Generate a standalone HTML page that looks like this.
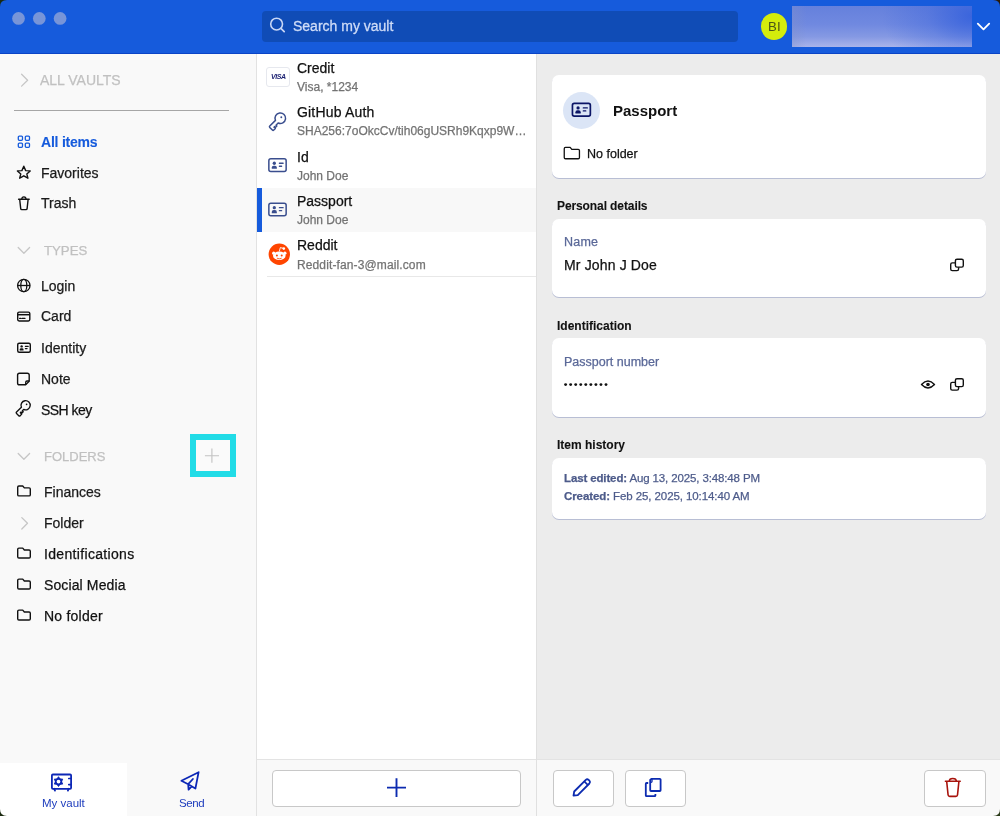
<!DOCTYPE html><html><head><meta charset="utf-8"><style>
html,body{margin:0;padding:0;width:1000px;height:816px;overflow:hidden;background:#fff}
body{position:relative;font-family:"Liberation Sans",sans-serif}
.t{position:absolute;white-space:nowrap;will-change:transform;-webkit-text-stroke:0.25px currentColor}
svg.ov{position:absolute;left:0;top:0}
</style></head><body>
<div style="position:absolute;left:0px;top:0px;width:1000px;height:53px;background:#165bdc"></div>
<div style="position:absolute;left:0px;top:53px;width:1000px;height:1px;background:#0a44c6"></div>
<div style="position:absolute;left:262px;top:11px;width:476px;height:31px;background:#104cb6;border-radius:4px"></div>
<div class="t" style="left:293px;top:19.35px;font-size:14px;line-height:14px;color:#cfdcf7;font-weight:400;-webkit-text-stroke:0.3px #cfdcf7">Search my vault</div>
<div style="position:absolute;left:760.5px;top:13px;width:26.5px;height:26.5px;border-radius:50%;background:#d4ec0c"></div>
<div class="t" style="left:768.3px;top:19.73px;font-size:13.2px;line-height:13.2px;color:#4a5418;font-weight:400;letter-spacing:0.2px;-webkit-text-stroke:0">BI</div>
<div style="position:absolute;left:791.5px;top:6px;width:180px;height:41px;background:radial-gradient(ellipse 90px 60px at 100% 25%, rgba(50,95,220,0.85), rgba(50,95,220,0.3) 50%, rgba(50,95,220,0) 100%),linear-gradient(90deg,rgba(130,145,200,0.35) 0%,rgba(130,145,200,0) 8%),linear-gradient(180deg,#6580dc 0%,#7089e0 45%,#8599e3 75%,#a9b4ea 100%)"></div>
<div style="position:absolute;left:0px;top:54px;width:256px;height:762px;background:#f9f9f9"></div>
<div style="position:absolute;left:256px;top:54px;width:1px;height:762px;background:#e2e2e2"></div>
<div class="t" style="left:40px;top:73.35px;font-size:14px;line-height:14px;color:#c1c1c1;font-weight:400;">ALL VAULTS</div>
<div style="position:absolute;left:14px;top:110px;width:215px;height:1.3px;background:#a6a6a6"></div>
<div class="t" style="left:41px;top:134.65px;font-size:14px;line-height:14px;color:#165bdc;font-weight:700;letter-spacing:-0.22px;-webkit-text-stroke:0.1px">All items</div>
<div class="t" style="left:41px;top:165.85px;font-size:14px;line-height:14px;color:#1b1b1b;font-weight:400;">Favorites</div>
<div class="t" style="left:41px;top:196.35px;font-size:14px;line-height:14px;color:#1b1b1b;font-weight:400;">Trash</div>
<div class="t" style="left:44px;top:243.53px;font-size:13.2px;line-height:13.2px;color:#c1c1c1;font-weight:400;">TYPES</div>
<div class="t" style="left:41px;top:279.05px;font-size:14px;line-height:14px;color:#1b1b1b;font-weight:400;">Login</div>
<div class="t" style="left:41px;top:309.15px;font-size:14px;line-height:14px;color:#1b1b1b;font-weight:400;">Card</div>
<div class="t" style="left:41px;top:340.95px;font-size:14px;line-height:14px;color:#1b1b1b;font-weight:400;">Identity</div>
<div class="t" style="left:41px;top:371.75px;font-size:14px;line-height:14px;color:#1b1b1b;font-weight:400;">Note</div>
<div class="t" style="left:41px;top:402.65px;font-size:14px;line-height:14px;color:#111111;font-weight:400;letter-spacing:-0.55px">SSH key</div>
<div class="t" style="left:44px;top:449.90px;font-size:13px;line-height:13px;color:#c1c1c1;font-weight:400;">FOLDERS</div>
<div style="position:absolute;left:190px;top:434px;width:46px;height:43px;box-sizing:border-box;border:6px solid #22dce7;background:#fafafa"></div>
<div class="t" style="left:44px;top:484.75px;font-size:14px;line-height:14px;color:#1b1b1b;font-weight:400;">Finances</div>
<div class="t" style="left:44px;top:515.85px;font-size:14px;line-height:14px;color:#1b1b1b;font-weight:400;">Folder</div>
<div class="t" style="left:44px;top:546.85px;font-size:14px;line-height:14px;color:#111111;font-weight:400;letter-spacing:0.33px">Identifications</div>
<div class="t" style="left:44px;top:577.85px;font-size:14px;line-height:14px;color:#111111;font-weight:400;letter-spacing:0.12px">Social Media</div>
<div class="t" style="left:44px;top:608.85px;font-size:14px;line-height:14px;color:#111111;font-weight:400;letter-spacing:0.22px">No folder</div>
<div style="position:absolute;left:0px;top:763px;width:127px;height:53px;background:#ffffff"></div>
<div class="t" style="left:41.5px;top:798.17px;font-size:11.5px;line-height:11.5px;color:#1e3dbd;font-weight:400;-webkit-text-stroke:0">My vault</div>
<div class="t" style="left:179px;top:798.07px;font-size:11.5px;line-height:11.5px;color:#1e3dbd;font-weight:400;letter-spacing:-0.4px;-webkit-text-stroke:0">Send</div>
<div style="position:absolute;left:257px;top:54px;width:279px;height:706px;background:#ffffff"></div>
<div style="position:absolute;left:536px;top:54px;width:1px;height:762px;background:#e0e0e0"></div>
<div style="position:absolute;left:257px;top:188px;width:279px;height:44px;background:#f8f8f8"></div>
<div style="position:absolute;left:257px;top:188px;width:5px;height:44px;background:#165bdc"></div>
<div class="t" style="left:297px;top:60.75px;font-size:14px;line-height:14px;color:#111111;font-weight:400;letter-spacing:0px">Credit</div>
<div class="t" style="left:297px;top:81.04px;font-size:12px;line-height:12px;color:#737373;font-weight:400;letter-spacing:0px">Visa, *1234</div>
<div class="t" style="left:297px;top:105.15px;font-size:14px;line-height:14px;color:#111111;font-weight:400;letter-spacing:0.18px">GitHub Auth</div>
<div class="t" style="left:297px;top:125.44px;font-size:12px;line-height:12px;color:#737373;font-weight:400;letter-spacing:0px">SHA256:7oOkcCv/tih06gUSRh9Kqxp9W…</div>
<div class="t" style="left:297px;top:149.55px;font-size:14px;line-height:14px;color:#111111;font-weight:400;letter-spacing:0px">Id</div>
<div class="t" style="left:297px;top:169.84px;font-size:12px;line-height:12px;color:#737373;font-weight:400;letter-spacing:0px">John Doe</div>
<div class="t" style="left:297px;top:193.95px;font-size:14px;line-height:14px;color:#111111;font-weight:400;letter-spacing:0px">Passport</div>
<div class="t" style="left:297px;top:214.24px;font-size:12px;line-height:12px;color:#737373;font-weight:400;letter-spacing:0px">John Doe</div>
<div class="t" style="left:297px;top:238.35px;font-size:14px;line-height:14px;color:#111111;font-weight:400;letter-spacing:0px">Reddit</div>
<div class="t" style="left:297px;top:258.64px;font-size:12px;line-height:12px;color:#737373;font-weight:400;letter-spacing:0.12px">Reddit-fan-3@mail.com</div>
<div style="position:absolute;left:267px;top:276px;width:269px;height:1px;background:#e8e8e8"></div>
<div style="position:absolute;left:265.5px;top:67px;width:24.5px;height:19.5px;box-sizing:border-box;border:1px solid #e6e8ee;border-radius:3px;background:#fff"></div>
<div class="t" style="left:270.6px;top:73.37px;font-size:7px;line-height:7px;color:#1a1f71;font-weight:700;letter-spacing:-0.4px;font-style:italic;-webkit-text-stroke:0">VISA</div>
<div style="position:absolute;left:537px;top:54px;width:463px;height:706px;background:#ececec"></div>
<div style="position:absolute;left:552px;top:75px;width:434px;height:103px;background:#fff;border-radius:7px;box-shadow:0 1px 0 #b8bed4"></div>
<div style="position:absolute;left:563px;top:92px;width:37px;height:37px;border-radius:50%;background:#dbe5f6"></div>
<div class="t" style="left:613px;top:102.90px;font-size:15px;line-height:15px;color:#111111;font-weight:700;-webkit-text-stroke:0">Passport</div>
<div class="t" style="left:586.5px;top:148.42px;font-size:12.5px;line-height:12.5px;color:#111111;font-weight:400;">No folder</div>
<div class="t" style="left:557px;top:199.84px;font-size:12px;line-height:12px;color:#111111;font-weight:700;letter-spacing:-0.1px;-webkit-text-stroke:0.1px">Personal details</div>
<div style="position:absolute;left:552px;top:218.5px;width:434px;height:78.5px;background:#fff;border-radius:7px;box-shadow:0 1px 0 #b8bed4"></div>
<div class="t" style="left:564px;top:236.42px;font-size:12.5px;line-height:12.5px;color:#5a6898;font-weight:400;letter-spacing:0.2px">Name</div>
<div class="t" style="left:564px;top:258.15px;font-size:14px;line-height:14px;color:#111111;font-weight:400;letter-spacing:0.15px">Mr John J Doe</div>
<div class="t" style="left:557px;top:319.54px;font-size:12px;line-height:12px;color:#111111;font-weight:700;-webkit-text-stroke:0.1px">Identification</div>
<div style="position:absolute;left:552px;top:338px;width:434px;height:79px;background:#fff;border-radius:7px;box-shadow:0 1px 0 #b8bed4"></div>
<div class="t" style="left:564px;top:356.42px;font-size:12.5px;line-height:12.5px;color:#5a6898;font-weight:400;">Passport number</div>
<div class="t" style="left:557px;top:439.04px;font-size:12px;line-height:12px;color:#111111;font-weight:700;-webkit-text-stroke:0.1px">Item history</div>
<div style="position:absolute;left:552px;top:457.5px;width:434px;height:61px;background:#fff;border-radius:7px;box-shadow:0 1px 0 #b8bed4"></div>
<div class="t" style="left:564px;top:473.07px;font-size:11.5px;line-height:11.5px;color:#4d5b8a;font-weight:400;letter-spacing:-0.13px"><b>Last edited:</b> Aug 13, 2025, 3:48:48 PM</div>
<div class="t" style="left:564px;top:490.97px;font-size:11.5px;line-height:11.5px;color:#4d5b8a;font-weight:400;letter-spacing:-0.09px"><b>Created:</b> Feb 25, 2025, 10:14:40 AM</div>
<div style="position:absolute;left:257px;top:759px;width:743px;height:1px;background:#e3e3e3"></div>
<div style="position:absolute;left:257px;top:760px;width:279px;height:56px;background:#f9f9f9"></div>
<div style="position:absolute;left:537px;top:760px;width:463px;height:56px;background:#f9f9f9"></div>
<div style="position:absolute;left:536px;top:759px;width:1px;height:57px;background:#e0e0e0"></div>
<div style="position:absolute;left:272px;top:770px;width:248.5px;height:36.5px;box-sizing:border-box;background:#fff;border:1px solid #c8c8c8;border-radius:4px"></div>
<div style="position:absolute;left:553px;top:770px;width:60.5px;height:36.5px;box-sizing:border-box;background:#fff;border:1px solid #c8c8c8;border-radius:4px"></div>
<div style="position:absolute;left:624.5px;top:770px;width:61px;height:36.5px;box-sizing:border-box;background:#fff;border:1px solid #c8c8c8;border-radius:4px"></div>
<div style="position:absolute;left:924px;top:770px;width:61.5px;height:36.5px;box-sizing:border-box;background:#fff;border:1px solid #c8c8c8;border-radius:4px"></div>
<svg class="ov" width="1000" height="816" viewBox="0 0 1000 816"><circle cx="18.5" cy="18.4" r="6.35" fill="#7895d8"/>
<circle cx="39.3" cy="18.4" r="6.35" fill="#7895d8"/>
<circle cx="60.1" cy="18.4" r="6.35" fill="#7895d8"/>
<circle cx="276.6" cy="24.1" r="5.9" fill="none" stroke="#c9d7f6" stroke-width="1.6" /><path d="M280.9 28.4 L284.2 31.7" fill="none" stroke="#c9d7f6" stroke-width="1.7" stroke-linecap="round"/>
<path d="M977.8 23.6 L983.5 29.4 L989.2 23.6" fill="none" stroke="#ffffff" stroke-width="1.8" stroke-linecap="round" stroke-linejoin="round"/>
<path d="M21.6 74.3 L27.6 80.2 L21.6 86.1" fill="none" stroke="#c6c6c6" stroke-width="1.3" stroke-linecap="round" stroke-linejoin="round"/>
<rect x="18.3" y="136.1" width="4.2" height="4.2" rx="1" fill="none" stroke="#165bdc" stroke-width="1.3" />
<rect x="18.3" y="143.1" width="4.2" height="4.2" rx="1" fill="none" stroke="#165bdc" stroke-width="1.3" />
<rect x="25.3" y="136.1" width="4.2" height="4.2" rx="1" fill="none" stroke="#165bdc" stroke-width="1.3" />
<rect x="25.3" y="143.1" width="4.2" height="4.2" rx="1" fill="none" stroke="#165bdc" stroke-width="1.3" />
<path d="M23.8 166.2 L25.7 170.6 L30.2 170.9 L26.8 173.9 L27.9 178.2 L23.8 175.8 L19.7 178.2 L20.8 173.9 L17.4 170.9 L21.9 170.6 Z" fill="none" stroke="#111111" stroke-width="1.4" stroke-linejoin="round"/>
<path d="M18.6 199.3 H29.2" fill="none" stroke="#111111" stroke-width="1.4" stroke-linecap="round"/><path d="M21.8 199.1 Q21.8 196.8 23.9 196.8 Q26 196.8 26 199.1" fill="none" stroke="#111111" stroke-width="1.3" /><path d="M19.7 199.5 L20.7 208.6 Q20.8 209.6 21.8 209.6 H26 Q27 209.6 27.1 208.6 L28.1 199.5" fill="none" stroke="#111111" stroke-width="1.4" stroke-linejoin="round"/>
<path d="M18.2 247.5 L23.9 253.2 L29.6 247.5" fill="none" stroke="#c6c6c6" stroke-width="1.3" stroke-linecap="round" stroke-linejoin="round"/>
<circle cx="23.8" cy="285.5" r="6.2" fill="none" stroke="#111111" stroke-width="1.35" /><ellipse cx="23.8" cy="285.5" rx="3.0" ry="6.2" fill="none" stroke="#111111" stroke-width="1.3" /><path d="M17.6 285.5 H30" fill="none" stroke="#111111" stroke-width="1.3" />
<rect x="17.7" y="312.1" width="12.1" height="8.9" rx="1.4" fill="none" stroke="#111111" stroke-width="1.4" /><path d="M17.7 314.7 H29.8" fill="none" stroke="#111111" stroke-width="1.5" /><path d="M19.6 318.4 H20.9 M22.1 318.4 H25" fill="none" stroke="#111111" stroke-width="1.2" stroke-linecap="round"/>
<rect x="17.7" y="343.2" width="12.6" height="9.1" rx="1.5" fill="none" stroke="#111111" stroke-width="1.4" /><circle cx="21.62" cy="346.38" r="1.21" fill="#111111"/><path d="M19.73 350.48 V349.61 Q19.73 348.17 21.17 348.17 H22.07 Q23.51 348.17 23.51 349.61 V350.48 Z" fill="#111111"/><path d="M25.40 346.38 H28.20 M25.40 348.59 H27.08" fill="none" stroke="#111111" stroke-width="1.19" stroke-linecap="round"/>
<path d="M19.5 373.2 H27.3 Q29.2 373.2 29.2 375.1 V381.2 L25.6 384.8 H19.5 Q17.6 384.8 17.6 382.9 V375.1 Q17.6 373.2 19.5 373.2 Z" fill="none" stroke="#111111" stroke-width="1.4" stroke-linejoin="round"/><path d="M29.2 381 H27 Q25.7 381 25.7 382.3 V384.8" fill="none" stroke="#111111" stroke-width="1.3" />
<path d="M21.42 407.22 L16.55 412.09 Q15.84 412.80 16.55 413.50 L18.74 415.69 Q19.45 416.40 20.16 415.69 L21.71 414.14 L20.37 412.80 L21.07 412.09 L21.92 412.94 L23.20 411.66 L22.35 410.82 L23.68 409.48 A4.60 4.60 0 1 0 21.42 407.22 Z" fill="none" stroke="#111111" stroke-width="1.35" stroke-linejoin="round"/><circle cx="26.6" cy="404.3" r="0.85" fill="#111111"/>
<path d="M18.2 453.5 L23.9 459.2 L29.6 453.5" fill="none" stroke="#c6c6c6" stroke-width="1.3" stroke-linecap="round" stroke-linejoin="round"/>
<path d="M211.9 448.6 V462.8 M204.9 455.7 H219" fill="none" stroke="#c2c2c2" stroke-width="1.1" />
<path d="M18.90 486.00 H22.74 L24.34 487.90 H29.10 Q30.30 487.90 30.30 489.10 V494.70 Q30.30 495.90 29.10 495.90 H18.90 Q17.70 495.90 17.70 494.70 V487.20 Q17.70 486.00 18.90 486.00 Z" fill="none" stroke="#111111" stroke-width="1.4" stroke-linejoin="round"/>
<path d="M21.8 517.6 L27.5 523.3 L21.8 529" fill="none" stroke="#c6c6c6" stroke-width="1.3" stroke-linecap="round" stroke-linejoin="round"/>
<path d="M18.90 548.10 H22.74 L24.34 550.00 H29.10 Q30.30 550.00 30.30 551.20 V556.80 Q30.30 558.00 29.10 558.00 H18.90 Q17.70 558.00 17.70 556.80 V549.30 Q17.70 548.10 18.90 548.10 Z" fill="none" stroke="#111111" stroke-width="1.4" stroke-linejoin="round"/>
<path d="M18.90 579.10 H22.74 L24.34 581.00 H29.10 Q30.30 581.00 30.30 582.20 V587.80 Q30.30 589.00 29.10 589.00 H18.90 Q17.70 589.00 17.70 587.80 V580.30 Q17.70 579.10 18.90 579.10 Z" fill="none" stroke="#111111" stroke-width="1.4" stroke-linejoin="round"/>
<path d="M18.90 610.10 H22.74 L24.34 612.00 H29.10 Q30.30 612.00 30.30 613.20 V618.80 Q30.30 620.00 29.10 620.00 H18.90 Q17.70 620.00 17.70 618.80 V611.30 Q17.70 610.10 18.90 610.10 Z" fill="none" stroke="#111111" stroke-width="1.4" stroke-linejoin="round"/>
<rect x="51.9" y="774.5" width="19.2" height="14.3" rx="1" fill="none" stroke="#0c27b6" stroke-width="1.8" /><path d="M71 778.5 H68.8 M71 784.6 H68.8" fill="none" stroke="#0c27b6" stroke-width="1.7" stroke-linecap="round"/><path d="M54.2 788.8 L55 790.6 M68.6 788.8 L67.9 790.6" fill="none" stroke="#0c27b6" stroke-width="1.8" stroke-linecap="round"/>
<circle cx="58.5" cy="781.6" r="2.75" fill="none" stroke="#0c27b6" stroke-width="1.7" /><path d="M57.20 778.68 L58.50 776.70 L59.80 778.68 Z" fill="#0c27b6" stroke="#0c27b6" stroke-width="0.9" stroke-linejoin="round"/><path d="M60.38 779.01 L62.74 779.15 L61.68 781.27 Z" fill="#0c27b6" stroke="#0c27b6" stroke-width="0.9" stroke-linejoin="round"/><path d="M61.68 781.93 L62.74 784.05 L60.38 784.19 Z" fill="#0c27b6" stroke="#0c27b6" stroke-width="0.9" stroke-linejoin="round"/><path d="M59.80 784.52 L58.50 786.50 L57.20 784.52 Z" fill="#0c27b6" stroke="#0c27b6" stroke-width="0.9" stroke-linejoin="round"/><path d="M56.62 784.19 L54.26 784.05 L55.32 781.93 Z" fill="#0c27b6" stroke="#0c27b6" stroke-width="0.9" stroke-linejoin="round"/><path d="M55.32 781.27 L54.26 779.15 L56.62 779.01 Z" fill="#0c27b6" stroke="#0c27b6" stroke-width="0.9" stroke-linejoin="round"/>
<path d="M198.6 772.2 L181.4 780.8 L188.2 784.2 L195.4 788.6 Z M188.2 784.2 L192.9 779 M188.2 784.2 L188.6 789.6 L191.7 786.4" fill="none" stroke="#0c27b6" stroke-width="1.8" stroke-linejoin="round" stroke-linecap="round"/>
<path d="M275.46 120.36 L269.76 126.05 Q269.06 126.76 269.76 127.46 L272.38 130.08 Q273.09 130.79 273.79 130.08 L275.35 128.52 L274.01 127.18 L274.71 126.47 L275.56 127.32 L276.84 126.05 L275.99 125.20 L278.14 123.04 A5.30 5.30 0 1 0 275.46 120.36 Z" fill="none" stroke="#3a4e8e" stroke-width="1.5" stroke-linejoin="round"/><circle cx="281.3" cy="117.2" r="0.95" fill="#3a4e8e"/>
<rect x="268.85" y="158.75" width="17.3" height="12.7" rx="2" fill="none" stroke="#3a4e8e" stroke-width="1.5" /><circle cx="274.30" cy="163.25" r="1.63" fill="#3a4e8e"/><path d="M271.77 168.79 V167.60 Q271.77 165.67 273.69 165.67 H274.91 Q276.84 165.67 276.84 167.60 V168.79 Z" fill="#3a4e8e"/><path d="M279.38 163.25 H283.14 M279.38 166.24 H281.64" fill="none" stroke="#3a4e8e" stroke-width="1.275" stroke-linecap="round"/>
<rect x="268.85" y="203.15" width="17.3" height="12.7" rx="2" fill="none" stroke="#3a4e8e" stroke-width="1.5" /><circle cx="274.30" cy="207.65" r="1.63" fill="#3a4e8e"/><path d="M271.77 213.19 V212.00 Q271.77 210.07 273.69 210.07 H274.91 Q276.84 210.07 276.84 212.00 V213.19 Z" fill="#3a4e8e"/><path d="M279.38 207.65 H283.14 M279.38 210.64 H281.64" fill="none" stroke="#3a4e8e" stroke-width="1.275" stroke-linecap="round"/>
<circle cx="279.3" cy="254.3" r="10.7" fill="#ff4500"/><ellipse cx="279.3" cy="255.8" rx="6.3" ry="4.3" fill="#fff"/><circle cx="273.7" cy="253.2" r="1.6" fill="#fff"/><circle cx="284.9" cy="253.2" r="1.6" fill="#fff"/><circle cx="276.9" cy="255.4" r="1" fill="#ff4500"/><circle cx="281.7" cy="255.4" r="1" fill="#ff4500"/><path d="M276.9 258.2 Q279.3 259.4 281.7 258.2" stroke="#ff4500" stroke-width="0.8" fill="none"/><path d="M279.3 251.5 L280.3 247.6 L283.2 248.3" stroke="#fff" stroke-width="0.9" fill="none"/><circle cx="283.8" cy="248.6" r="1.3" fill="#fff"/>
<rect x="572.45" y="103.44999999999999" width="17.900000000000002" height="12.600000000000001" rx="1.8" fill="none" stroke="#0b1566" stroke-width="1.7" /><circle cx="578.07" cy="107.89" r="1.64" fill="#0b1566"/><path d="M575.42 113.47 V112.33 Q575.42 110.32 577.43 110.32 H578.70 Q580.71 110.32 580.71 112.33 V113.47 Z" fill="#0b1566"/><path d="M583.36 107.89 H587.28 M583.36 110.89 H585.71" fill="none" stroke="#0b1566" stroke-width="1.4449999999999998" stroke-linecap="round"/>
<path d="M565.45 147.45 H570.19 L571.79 149.35 H578.25 Q579.45 149.35 579.45 150.55 V157.55 Q579.45 158.75 578.25 158.75 H565.45 Q564.25 158.75 564.25 157.55 V148.65 Q564.25 147.45 565.45 147.45 Z" fill="none" stroke="#111111" stroke-width="1.3" stroke-linejoin="round"/>
<rect x="955.4" y="259.2" width="7.9" height="7.9" rx="1.6" fill="none" stroke="#111111" stroke-width="1.4" /><path d="M955.2 262.9 H952.3 Q950.7 262.9 950.7 264.5 V269.0 Q950.7 270.6 952.3 270.6 H957 Q958.6 270.6 958.6 269.0 V267.3" fill="none" stroke="#111111" stroke-width="1.4" />
<circle cx="565.60" cy="384.6" r="1.45" fill="#111111"/>
<circle cx="570.65" cy="384.6" r="1.45" fill="#111111"/>
<circle cx="575.70" cy="384.6" r="1.45" fill="#111111"/>
<circle cx="580.75" cy="384.6" r="1.45" fill="#111111"/>
<circle cx="585.80" cy="384.6" r="1.45" fill="#111111"/>
<circle cx="590.85" cy="384.6" r="1.45" fill="#111111"/>
<circle cx="595.90" cy="384.6" r="1.45" fill="#111111"/>
<circle cx="600.95" cy="384.6" r="1.45" fill="#111111"/>
<circle cx="606.00" cy="384.6" r="1.45" fill="#111111"/>
<path d="M921.5 384.5 Q928 377.6 934.5 384.5 Q928 391.4 921.5 384.5 Z" fill="none" stroke="#111111" stroke-width="1.4" stroke-linejoin="round"/><circle cx="928" cy="384.5" r="1.8" fill="#111111"/>
<rect x="955.4" y="378.7" width="7.9" height="7.9" rx="1.6" fill="none" stroke="#111111" stroke-width="1.4" /><path d="M955.2 382.4 H952.3 Q950.7 382.4 950.7 384 V388.5 Q950.7 390.1 952.3 390.1 H957 Q958.6 390.1 958.6 388.5 V386.8" fill="none" stroke="#111111" stroke-width="1.4" />
<path d="M396.5 778.3 V797 M387 787.6 H406" fill="none" stroke="#0c2bb0" stroke-width="1.9" />
<path d="M573.5 795.6 L574.2 791.5 L585.8 779.9 Q587.2 778.6 588.6 779.9 L589.4 780.7 Q590.7 782.1 589.4 783.5 L577.8 795.1 Z" fill="none" stroke="#0c2bb0" stroke-width="1.8" stroke-linejoin="round"/><path d="M584.3 781.4 L588 785.1" fill="none" stroke="#0c2bb0" stroke-width="1.6" />
<path d="M651.4 778.8 H659.8 Q660.6 778.8 660.6 779.6 V790.2 Q660.6 791 659.8 791 H651 Q650.2 791 650.2 790.2 V780 Z" fill="none" stroke="#0c2bb0" stroke-width="1.8" stroke-linejoin="round"/><path d="M648.2 783 H646.6 Q645.8 783 645.8 783.8 V795.4 Q645.8 796.2 646.6 796.2 H654.6 Q655.4 796.2 655.4 795.4 V794" fill="none" stroke="#0c2bb0" stroke-width="1.8" /><path d="M652 778.8 V781.6 Q652 782.4 651.2 782.4 H650.2" fill="none" stroke="#0c2bb0" stroke-width="1.3" />
<path d="M945.4 781.3 H960.2" fill="none" stroke="#a8130c" stroke-width="1.6" stroke-linecap="round"/><path d="M949.3 781 Q949.3 778.4 952.8 778.4 Q956.3 778.4 956.3 781" fill="none" stroke="#a8130c" stroke-width="1.5" /><path d="M946.7 781.5 L948.1 795 Q948.3 796.4 949.7 796.4 H955.9 Q957.3 796.4 957.5 795 L958.9 781.5" fill="none" stroke="#a8130c" stroke-width="1.6" stroke-linejoin="round"/>
<path d="M0 0 H7 Q0 0 0 7 Z" fill="#1a2a10"/><path d="M1000 0 H993 Q1000 0 1000 7 Z" fill="#2a1a08"/><path d="M1000 816 H993 Q1000 816 1000 809 Z" fill="#2a3a18"/><path d="M0 816 H7 Q0 816 0 809 Z" fill="#1a2a10"/></svg>
</body></html>
